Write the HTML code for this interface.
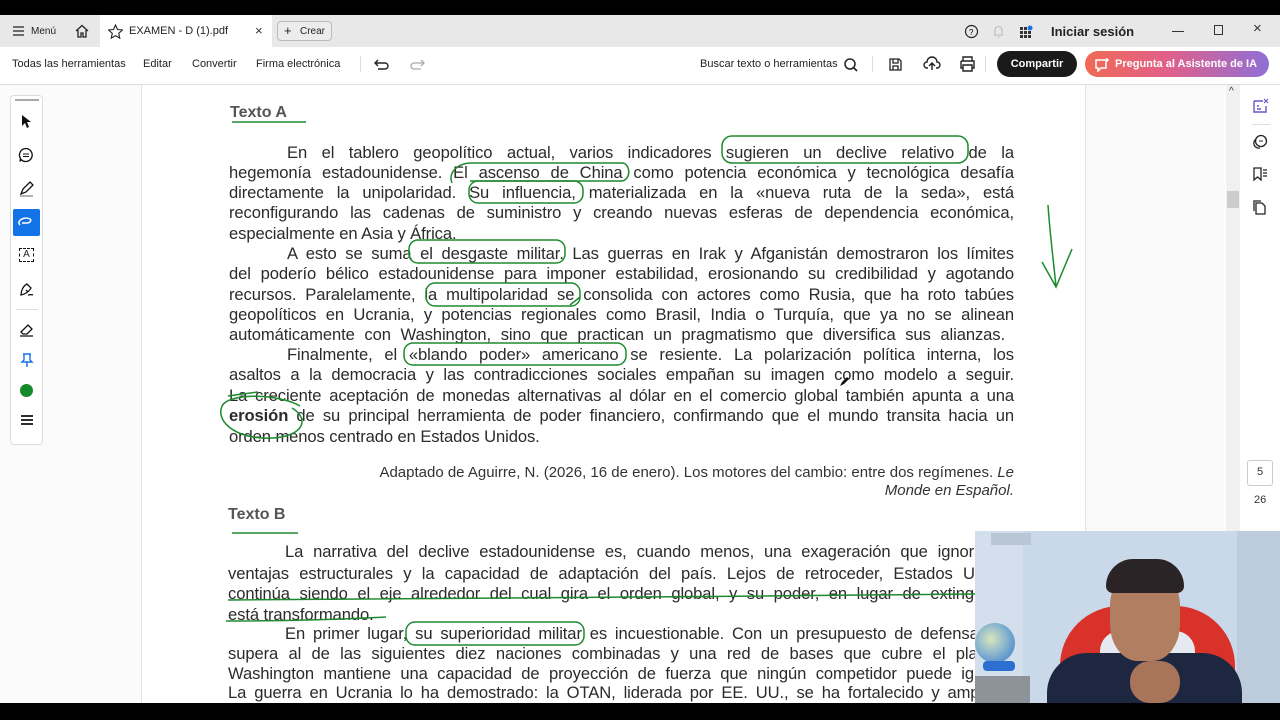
<!DOCTYPE html>
<html><head><meta charset="utf-8"><style>
*{margin:0;padding:0;box-sizing:border-box}
body{width:1280px;height:720px;overflow:hidden;background:#fff;font-family:"Liberation Sans",Arial,sans-serif;position:relative;color:#222}
.abs{position:absolute}
.tb{font-size:11px;color:#222;top:25px}
.tl{font-size:11px;color:#222;top:58px}
.ln{position:absolute;left:229px;width:785px;font-size:16.6px;color:#2b2b2b;text-align:justify;text-align-last:justify;white-space:nowrap;line-height:20px;letter-spacing:-0.1px}
.ln.nj{text-align-last:left}
.ln.in{left:287px;width:727px}
</style></head><body>
<div class="abs" style="left:0;top:0;width:1280px;height:15px;background:#000"></div>
<div class="abs" style="left:0;top:15px;width:1280px;height:32px;background:#e8e8e8"></div>
<div class="abs" style="left:100px;top:15px;width:172px;height:32px;background:#fff"></div>
<svg class="abs" style="left:12px;top:25px" width="14" height="12"><path d="M1 2h11M1 6h11M1 10h11" stroke="#222" stroke-width="1.3"/></svg>
<div class="abs tb" style="left:31px;font-size:10px;top:26px">Menú</div>
<svg class="abs" style="left:74px;top:23px" width="16" height="16"><path d="M2 8L8 2.5L14 8M4 7v7h3v-4h2v4h3V7" fill="none" stroke="#222" stroke-width="1.3"/></svg>
<svg class="abs" style="left:108px;top:24px" width="15" height="15"><path d="M7.5 1l2 4.5 5 .5-3.8 3.3 1.1 4.9-4.3-2.6-4.3 2.6 1.1-4.9L.5 6l5-.5z" fill="none" stroke="#222" stroke-width="1.1"/></svg>
<div class="abs tb" style="left:129px;font-size:11px">EXAMEN - D (1).pdf</div>
<div class="abs" style="left:255px;top:23px;font-size:13px;color:#333">×</div>
<div class="abs" style="left:277px;top:21px;width:55px;height:20px;border:1px solid #bbb;border-radius:4px;background:#ececec"></div>
<div class="abs" style="left:284px;top:23px;font-size:13px">+</div>
<div class="abs" style="left:300px;font-size:10px;top:26px">Crear</div>
<svg class="abs" style="left:964px;top:24px" width="15" height="15"><circle cx="7.5" cy="7.5" r="6" fill="none" stroke="#222" stroke-width="1.2"/><text x="5" y="11" font-size="8" font-family="Liberation Sans">?</text></svg>
<svg class="abs" style="left:992px;top:24px" width="13" height="15"><path d="M2 11h9M3 11V6a3.5 3.5 0 0 1 7 0v5M5.5 13h2" fill="none" stroke="#bbb" stroke-width="1.1"/></svg>
<svg class="abs" style="left:1019px;top:24px" width="15" height="15"><g fill="#333"><rect x="1" y="3" width="3" height="3"/><rect x="5" y="3" width="3" height="3"/><rect x="1" y="7" width="3" height="3"/><rect x="5" y="7" width="3" height="3"/><rect x="9" y="7" width="3" height="3"/><rect x="1" y="11" width="3" height="3"/><rect x="5" y="11" width="3" height="3"/><rect x="9" y="11" width="3" height="3"/></g><circle cx="11" cy="4" r="2.5" fill="#1a73e8"/></svg>
<div class="abs" style="left:1051px;top:24px;font-size:13px;font-weight:bold;color:#222">Iniciar sesión</div>
<div class="abs" style="left:1172px;top:31px;width:12px;height:1px;background:#333"></div>
<div class="abs" style="left:1214px;top:25px;width:9px;height:10px;border:1px solid #333"></div>
<div class="abs" style="left:1253px;top:20px;font-size:15px;color:#333">×</div>
<div class="abs" style="left:0;top:84px;width:1280px;height:1px;background:#ddd"></div>
<div class="abs tl" style="left:12px">Todas las herramientas</div>
<div class="abs tl" style="left:143px">Editar</div>
<div class="abs tl" style="left:192px">Convertir</div>
<div class="abs tl" style="left:256px">Firma electrónica</div>
<div class="abs" style="left:360px;top:56px;width:1px;height:16px;background:#ddd"></div>
<svg class="abs" style="left:373px;top:58px" width="18" height="14"><path d="M5 2L2 5l3 3M2 5h10a3 3 0 0 1 0 6H5" fill="none" stroke="#222" stroke-width="1.4"/></svg>
<svg class="abs" style="left:409px;top:58px" width="18" height="14"><path d="M12 2l3 3-3 3M15 5H5a3 3 0 0 0 0 6h7" fill="none" stroke="#aaa" stroke-width="1.3"/></svg>
<div class="abs tl" style="left:700px">Buscar texto o herramientas</div>
<svg class="abs" style="left:843px;top:57px" width="16" height="16"><circle cx="7" cy="7" r="5" fill="none" stroke="#222" stroke-width="1.5"/><path d="M10.5 10.5L14 14" stroke="#222" stroke-width="1.6"/></svg>
<div class="abs" style="left:872px;top:56px;width:1px;height:16px;background:#ddd"></div>
<svg class="abs" style="left:888px;top:57px" width="15" height="15"><path d="M2 2h9l2 2v9H2z M5 2v4h5V2M5 13V9h5v4" fill="none" stroke="#222" stroke-width="1.3"/></svg>
<svg class="abs" style="left:923px;top:56px" width="18" height="16"><path d="M5 12H4a3 3 0 0 1 0-6 5 5 0 0 1 10 0 3 3 0 0 1 0 6h-1M9 14V7M6 10l3-3 3 3" fill="none" stroke="#222" stroke-width="1.4"/></svg>
<svg class="abs" style="left:959px;top:56px" width="17" height="16"><path d="M4 5V1h9v4M2 5h13v7h-2M4 12H2V5M4 9h9v6H4z" fill="none" stroke="#222" stroke-width="1.4"/></svg>
<div class="abs" style="left:985px;top:56px;width:1px;height:16px;background:#ddd"></div>
<div class="abs" style="left:997px;top:51px;width:80px;height:26px;border-radius:13px;background:#1a1a1a;color:#fff;font-size:11px;font-weight:bold;text-align:center;line-height:26px">Compartir</div>
<div class="abs" style="left:1085px;top:51px;width:184px;height:26px;border-radius:13px;background:linear-gradient(90deg,#f06a55,#e0608a 45%,#8f6fd6);color:#fff;font-size:11px;font-weight:bold;line-height:26px;padding-left:30px">Pregunta al Asistente de IA</div>
<svg class="abs" style="left:1094px;top:57px" width="16" height="15"><path d="M2 3h10v8H7l-3 3v-3H2z" fill="none" stroke="#fff" stroke-width="1.5"/><path d="M13 1v4M11 3h4" stroke="#fff" stroke-width="1.3"/></svg>
<div class="abs" style="left:0;top:85px;width:141px;height:618px;background:#fbfbfb"></div>
<div class="abs" style="left:141px;top:85px;width:1px;height:618px;background:#e3e3e3"></div>
<div class="abs" style="left:10px;top:95px;width:33px;height:350px;background:#fff;border:1px solid #ddd;border-radius:4px"></div>
<div class="abs" style="left:15px;top:99px;width:24px;height:2px;background:#aaa"></div>
<svg class="abs" style="left:18px;top:113px" width="18" height="18"><path d="M4 2v11l3-3 2 5 2-1-2-5h4z" fill="#111"/></svg>
<svg class="abs" style="left:18px;top:147px" width="18" height="18"><path d="M8 1.5a6.5 6.5 0 1 1-5 11l-1 2 .5-3A6.5 6.5 0 0 1 8 1.5z" fill="none" stroke="#111" stroke-width="1.3"/><path d="M5 7h6M5 9.5h6" stroke="#111"/></svg>
<svg class="abs" style="left:18px;top:180px" width="18" height="18"><path d="M3 14l2-5 7-7 3 3-7 7z" fill="none" stroke="#111" stroke-width="1.3"/><path d="M2 16h13" stroke="#999" stroke-width="1.5"/></svg>
<div class="abs" style="left:13px;top:209px;width:27px;height:27px;background:#1473e6;border-radius:2px"></div>
<svg class="abs" style="left:16px;top:213px" width="22" height="18"><path d="M4 12c-4-4 4-9 10-6 2 1 0 4-3 4H6" fill="none" stroke="#fff" stroke-width="1.5"/></svg>
<div class="abs" style="left:19px;top:248px;width:15px;height:14px;border:1px dashed #111;font-size:10px;text-align:center;line-height:12px">A</div>
<svg class="abs" style="left:18px;top:281px" width="18" height="18"><path d="M3 14c0-4 2-9 6-11l4 4c-2 4-6 6-10 7zM8 9l2 2M10 14c2 0 3-1 5 0" fill="none" stroke="#111" stroke-width="1.3"/></svg>
<div class="abs" style="left:16px;top:309px;width:22px;height:1px;background:#ddd"></div>
<svg class="abs" style="left:18px;top:321px" width="18" height="18"><path d="M3 11l7-7 4 4-5 5H5zM2 15h13" fill="none" stroke="#111" stroke-width="1.3"/></svg>
<svg class="abs" style="left:20px;top:352px" width="14" height="16"><path d="M3 2h8M4 2v6l-2 2h10l-2-2V2M7 10v5" fill="none" stroke="#1473e6" stroke-width="1.4"/></svg>
<div class="abs" style="left:20px;top:384px;width:13px;height:13px;border-radius:50%;background:#148a2a"></div>
<svg class="abs" style="left:20px;top:414px" width="14" height="12"><path d="M1 2h12M1 6h12M1 10h12" stroke="#111" stroke-width="1.8"/></svg>
<div class="abs" style="left:1085px;top:85px;width:140px;height:446px;background:#f9f9f9;border-left:1px solid #e5e5e5"></div>
<div class="abs" style="left:1226px;top:85px;width:14px;height:446px;background:#f0f0f0"></div>
<div class="abs" style="left:1229px;top:86px;font-size:10px;color:#333">^</div>
<div class="abs" style="left:1227px;top:191px;width:12px;height:17px;background:#ccc"></div>
<svg class="abs" style="left:1252px;top:98px" width="17" height="17"><path d="M2 3h9M2 3v11h12V8M5 8h2M5 11h4" fill="none" stroke="#6a55c8" stroke-width="1.4"/><path d="M12 1l4 4M16 1l-4 4" stroke="#6a55c8" stroke-width="1.2"/></svg>
<div class="abs" style="left:1252px;top:124px;width:18px;height:1px;background:#ddd"></div>
<svg class="abs" style="left:1252px;top:134px" width="16" height="16"><circle cx="9" cy="7" r="5.5" fill="none" stroke="#222" stroke-width="1.3"/><path d="M4 5a5 5 0 0 0 4 9" fill="none" stroke="#222" stroke-width="1.3"/><path d="M7 7h4" stroke="#222"/></svg>
<svg class="abs" style="left:1252px;top:166px" width="16" height="16"><path d="M2 2h7v12l-3.5-3L2 14z M11 4h4M11 7h4M11 10h4" fill="none" stroke="#222" stroke-width="1.3"/></svg>
<svg class="abs" style="left:1252px;top:199px" width="16" height="17"><path d="M4 4h6l3 3v8H4z M2 12V2h7" fill="none" stroke="#222" stroke-width="1.3"/></svg>
<div class="abs" style="left:1247px;top:460px;width:26px;height:26px;border:1px solid #ccc;border-radius:3px;font-size:11px;text-align:center;line-height:22px;color:#333">5</div>
<div class="abs" style="left:1254px;top:494px;font-size:11px;color:#333">26</div>

<div class="abs" style="left:230px;top:104px;font-size:16px;font-weight:bold;color:#555">Texto A</div>
<div class="ln in" style="top:143px">En el tablero geopolítico actual, varios indicadores sugieren un declive relativo de la</div>
<div class="ln" style="top:163px">hegemonía estadounidense. El ascenso de China como potencia económica y tecnológica desafía</div>
<div class="ln" style="top:183px">directamente la unipolaridad. Su influencia, materializada en la «nueva ruta de la seda», está</div>
<div class="ln" style="top:203px">reconfigurando las cadenas de suministro y creando nuevas esferas de dependencia económica,</div>
<div class="ln nj" style="top:224px">especialmente en Asia y África.</div>
<div class="ln in" style="top:244px">A esto se suma el desgaste militar. Las guerras en Irak y Afganistán demostraron los límites</div>
<div class="ln" style="top:264px">del poderío bélico estadounidense para imponer estabilidad, erosionando su credibilidad y agotando</div>
<div class="ln" style="top:285px">recursos. Paralelamente, la multipolaridad se consolida con actores como Rusia, que ha roto tabúes</div>
<div class="ln" style="top:305px">geopolíticos en Ucrania, y potencias regionales como Brasil, India o Turquía, que ya no se alinean</div>
<div class="ln" style="top:325px;width:776px">automáticamente con Washington, sino que practican un pragmatismo que diversifica sus alianzas.</div>
<div class="ln in" style="top:345px">Finalmente, el «blando poder» americano se resiente. La polarización política interna, los</div>
<div class="ln" style="top:365px">asaltos a la democracia y las contradicciones sociales empañan su imagen como modelo a seguir.</div>
<div class="ln" style="top:386px">La creciente aceptación de monedas alternativas al dólar en el comercio global también apunta a una</div>
<div class="ln" style="top:406px"><b>erosión</b> de su principal herramienta de poder financiero, confirmando que el mundo transita hacia un</div>
<div class="ln nj" style="top:427px">orden menos centrado en Estados Unidos.</div>
<div class="abs" style="left:300px;width:714px;top:464px;font-size:15px;color:#333;text-align:right;line-height:18px">Adaptado de Aguirre, N. (2026, 16 de enero). Los motores del cambio: entre dos regímenes. <i>Le<br>Monde en Español.</i></div>
<div class="abs" style="left:228px;top:506px;font-size:16px;font-weight:bold;color:#555">Texto B</div>
<div class="ln in" style="top:542px;left:285px;width:729px">La narrativa del declive estadounidense es, cuando menos, una exageración que ignora las</div>
<div class="ln" style="top:564px;left:228px;width:786px">ventajas estructurales y la capacidad de adaptación del país. Lejos de retroceder, Estados Unidos</div>
<div class="ln" style="top:584px;left:228px;width:786px">continúa siendo el eje alrededor del cual gira el orden global, y su poder, en lugar de extinguirse,</div>
<div class="ln nj" style="top:605px;left:228px">está transformando.</div>
<div class="ln in" style="top:624px;left:285px;width:729px">En primer lugar, su superioridad militar es incuestionable. Con un presupuesto de defensa que</div>
<div class="ln" style="top:644px;left:228px;width:786px">supera al de las siguientes diez naciones combinadas y una red de bases que cubre el planeta,</div>
<div class="ln" style="top:664px;left:228px;width:786px">Washington mantiene una capacidad de proyección de fuerza que ningún competidor puede igualar.</div>
<div class="ln" style="top:683px;left:228px;width:786px">La guerra en Ucrania lo ha demostrado: la OTAN, liderada por EE. UU., se ha fortalecido y ampliado</div>

<svg class="abs" style="left:0;top:0" width="1280" height="720" fill="none" stroke="#1d8a2e" stroke-width="1.5">
<path d="M232 122h74"/>
<rect x="722" y="136" width="246" height="27" rx="10"/>
<path d="M452 183c-4-10 5-20 20-20h150c8 0 10 16 0 18H470"/>
<rect x="469" y="181" width="114" height="22" rx="9"/>
<rect x="409" y="240" width="156" height="23" rx="9"/>
<rect x="426" y="283" width="154" height="23" rx="9"/>
<path d="M570 305l10-8"/>
<rect x="404" y="343" width="222" height="22" rx="9"/>
<path d="M300 406c-20-12-70-14-78 0-6 14 10 30 40 32 40 2 50-18 30-30"/>
<path d="M228 396l30-4"/>
<path d="M1048 205c2 30 6 60 8 82M1042 262l14 25 16-38"/>
<path d="M232 533h66"/>
<path d="M228 600c200-2 500-3 748-6"/>
<path d="M226 621c60 0 120-2 160-4"/>
<rect x="406" y="622" width="178" height="23" rx="9"/>
</svg>
<svg class="abs" style="left:838px;top:376px" width="12" height="12"><path d="M2 10l2-4 5-5 2 2-5 5z" fill="#111"/></svg>

<div class="abs" style="left:975px;top:531px;width:305px;height:172px;background:#c9d9ea;overflow:hidden">
<div class="abs" style="left:0;top:0;width:48px;height:172px;background:#d3dfec"></div>
<div class="abs" style="left:16px;top:2px;width:40px;height:12px;background:#b8c6d6"></div>
<div class="abs" style="left:0;top:145px;width:55px;height:30px;background:#8e9399"></div>
<div class="abs" style="left:0;top:92px;width:40px;height:40px;border-radius:50%;background:radial-gradient(circle at 40% 40%,#d9e6c0,#6fa3d0 60%,#3a78b8)"></div>
<div class="abs" style="left:8px;top:130px;width:32px;height:10px;background:#2d6fd0;border-radius:4px"></div>
<div class="abs" style="left:262px;top:0;width:43px;height:172px;background:#bcccdc"></div>
<div class="abs" style="left:85px;top:75px;width:175px;height:110px;border-radius:60px 60px 0 0;background:#d8322a"></div>
<div class="abs" style="left:125px;top:100px;width:95px;height:50px;background:#e6e9ef;border-radius:20px"></div>
<div class="abs" style="left:72px;top:122px;width:195px;height:70px;border-radius:40px 40px 0 0;background:#1d2740"></div>
<div class="abs" style="left:135px;top:38px;width:70px;height:92px;border-radius:40%;background:#b27e62"></div>
<div class="abs" style="left:131px;top:28px;width:78px;height:34px;border-radius:40px 40px 10px 10px;background:#2a2426"></div>
<div class="abs" style="left:155px;top:130px;width:50px;height:42px;border-radius:20px;background:#a8755a"></div>
</div>
<div class="abs" style="left:0;top:703px;width:1280px;height:17px;background:#000"></div>
</body></html>
